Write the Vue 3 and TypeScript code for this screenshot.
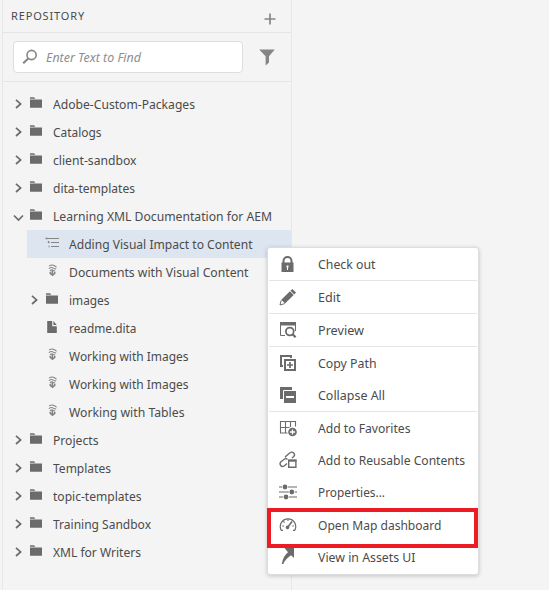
<script setup lang="ts">
interface TreeNode { label: string; icon: 'folder' | 'map' | 'topic' | 'file'; width: number; level?: number; open?: boolean; leaf?: boolean; selected?: boolean }
interface MenuItem { label: string; icon: string; width: number; height: number; line?: boolean; marked?: boolean }

const nodes: TreeNode[] = [
  { label: 'Adobe-Custom-Packages', icon: 'folder', width: 142 },
  { label: 'Catalogs', icon: 'folder', width: 48.5 },
  { label: 'client-sandbox', icon: 'folder', width: 83.5 },
  { label: 'dita-templates', icon: 'folder', width: 82 },
  { label: 'Learning XML Documentation for AEM', icon: 'folder', width: 219, open: true },
  { label: 'Adding Visual Impact to Content', icon: 'map', width: 183.5, level: 1, leaf: true, selected: true },
  { label: 'Documents with Visual Content', icon: 'topic', width: 179.5, level: 1, leaf: true },
  { label: 'images', icon: 'folder', width: 40.5, level: 1 },
  { label: 'readme.dita', icon: 'file', width: 67.5, level: 1, leaf: true },
  { label: 'Working with Images', icon: 'topic', width: 119.5, level: 1, leaf: true },
  { label: 'Working with Images', icon: 'topic', width: 119.5, level: 1, leaf: true },
  { label: 'Working with Tables', icon: 'topic', width: 115.5, level: 1, leaf: true },
  { label: 'Projects', icon: 'folder', width: 45.5 },
  { label: 'Templates', icon: 'folder', width: 58 },
  { label: 'topic-templates', icon: 'folder', width: 88.5 },
  { label: 'Training Sandbox', icon: 'folder', width: 98 },
  { label: 'XML for Writers', icon: 'folder', width: 88 },
]

const menu: MenuItem[] = [
  { label: 'Check out', icon: 'lock', width: 57.5, height: 33, line: true },
  { label: 'Edit', icon: 'edit', width: 22.5, height: 33, line: true },
  { label: 'Preview', icon: 'preview', width: 46, height: 33, line: true },
  { label: 'Copy Path', icon: 'copy', width: 58.5, height: 32 },
  { label: 'Collapse All', icon: 'collapse', width: 67, height: 33, line: true },
  { label: 'Add to Favorites', icon: 'favorite', width: 92.5, height: 32 },
  { label: 'Add to Reusable Contents', icon: 'reuse', width: 147, height: 32 },
  { label: 'Properties...', icon: 'properties', width: 67, height: 32 },
  { label: 'Open Map dashboard', icon: 'gauge', width: 123.5, height: 33, marked: true },
  { label: 'View in Assets UI', icon: 'arrow', width: 97.5, height: 31 },
]

// Spreads the letters so that a text takes its design width.
const vFit = {
  mounted(el: HTMLElement, binding: { value: number }) {
    const natural = el.getBoundingClientRect().width
    el.style.letterSpacing = `${(binding.value - natural) / (el.textContent?.length ?? 1)}px`
  },
}

// Condenses the letterforms of a label to its design width.
const vCondense = {
  mounted(el: HTMLElement, binding: { value: number }) {
    el.style.transform = `scaleX(${binding.value / el.getBoundingClientRect().width})`
  },
}
</script>

<template>
  <div class="page">
    <aside class="panel">
      <header class="head">
        <h1 v-fit="74">REPOSITORY</h1>
        <svg class="plus" width="12" height="12" viewBox="0 0 12 12"><path d="M6 .5v11M.5 6h11" stroke="#858585" stroke-width="1.7" /></svg>
      </header>
      <div class="search">
        <div class="field">
          <svg width="16" height="16" viewBox="0 0 16 16" fill="none" stroke="#858585"><circle cx="9.6" cy="6" r="4.6" stroke-width="1.6" /><path d="M6.2 9.4 1.2 14.2" stroke-width="2.1" /></svg>
          <span v-condense="95" class="label">Enter Text to Find</span>
        </div>
        <svg class="funnel" width="16" height="17" viewBox="0 0 16 17"><path d="M.2.5h15.6L10 7.3v6.3l-3.4 3V7.3z" fill="#858585" /></svg>
      </div>
      <ul class="tree">
        <li v-for="(n, i) in nodes" :key="i" :class="{ nested: n.level, selected: n.selected }">
          <span class="twist">
            <svg v-if="n.open" class="down" width="11" height="8" viewBox="0 0 11 8"><path d="m1 1.5 4.5 4.5L10 1.5" fill="none" stroke="#6b6b6b" stroke-width="1.7" /></svg>
            <svg v-else-if="!n.leaf" width="8" height="10" viewBox="0 0 8 10"><path d="m1 .8 4.6 4.1L1 9" fill="none" stroke="#6b6b6b" stroke-width="1.7" /></svg>
          </span>
          <span class="kind">
            <svg width="16" height="16" viewBox="0 0 16 16">
              <path v-if="n.icon === 'folder'" d="M1 2.2h4l1.5 1.5H1zM1 4.5h12v8.3H1z" fill="#6b6b6b" />
              <g v-else-if="n.icon === 'map'" stroke="#858585"><path d="M1 3.5h13M6 7.5h8M6 11.5h8" /><path d="M.5 3.5h2M3.5 7.5h1M3.5 11.5h1M3.5 6v2" stroke-width="1.3" /></g>
              <g v-else-if="n.icon === 'topic'" fill="none" stroke="#858585"><path d="M4 3.1q3-2 5.5-.3T11 3.6M3.8 5.6q2.5-1.8 4.5-.5t2.8.5M5 7.6q2-1.2 3-.3t2 .3" stroke-width="1.1" /><path d="M7.3 7v4" stroke-width="1.4" /><path d="M4.5 8.7h1.7v1.5h2.6V8.7h1.7v2L7.5 13.3 4.5 10.7z" fill="#858585" stroke="none" /></g>
              <path v-else d="M2.2 2h5v5.3h4.6V14H2.2zM8.4 2 11.8 6H8.4z" fill="#6b6b6b" />
            </svg>
          </span>
          <span v-condense="n.width" class="label">{{ n.label }}</span>
        </li>
      </ul>
    </aside>

    <nav class="menu">
      <div v-for="m in menu" :key="m.label" class="item" :class="{ line: m.line, marked: m.marked }" :style="{ height: m.height + 'px' }">
        <svg width="18" height="18" viewBox="0 0 18 18" fill="none" stroke="#6b6b6b">
          <g v-if="m.icon === 'lock'"><path d="M4.5 8V6a4 4 0 0 1 8 0v2" stroke-width="2" /><path d="M2.5 7.5h12V17h-12zM7.5 10.5v1.7l.5.5V15h1v-2.3l.5-.5v-1.7z" fill="#6b6b6b" fill-rule="evenodd" stroke="none" /></g>
          <g v-else-if="m.icon === 'edit'" stroke="none" fill="#6b6b6b"><path d="m13.3 1 3.7 3.6-1.7 1.8-3.8-3.7zM10.9 3.3l3.8 3.7L6 15.4 2.3 11.8z" /><path d="M2.2 12.3 1 17l4.7-1.4" stroke="#6b6b6b" fill="none" /></g>
          <g v-else-if="m.icon === 'preview'"><path d="M1 1h16v3.5H1z" fill="#6b6b6b" stroke="none" /><path d="M1.5 3v11.5H6M16.5 3v7" /><circle cx="10.8" cy="10.5" r="3.9" stroke-width="1.8" /><path d="m13.6 13.2 3 3" stroke-width="2.2" /></g>
          <g v-else-if="m.icon === 'copy'"><path d="M4 12H2V2h10v2" stroke-width="2" /><path d="M6 6h10v10H6z" stroke-width="2" /><path d="M11 8v6M8 11h6" stroke-width="1.7" /></g>
          <g v-else-if="m.icon === 'collapse'" fill="#6b6b6b" stroke="none"><path d="M1 1h12v3H5v9H1zM5 5h12v12H5z" /><path d="M4.5 13V4.5H13" fill="none" stroke="#fff" /><path d="M7 10h8v2H7z" fill="#fff" /></g>
          <g v-else-if="m.icon === 'favorite'"><path d="M1.5 2.5h15v5M1.5 2v12h7M6.5 2v12M11.5 2v6M1.5 8.5h9" stroke-width="1.1" /><circle cx="13.5" cy="13" r="4.3" fill="#6b6b6b" stroke="none" /><path d="M13.5 10.4v5.2M10.9 13h5.2" stroke="#fff" stroke-width="1.3" /></g>
          <g v-else-if="m.icon === 'reuse'"><path d="m6 6 4.7-4q2.3-1.7 4 0t.1 3.5L13 7M8.5 8.5 6.7 7.3 2 10.7q-1.8 2-.3 3.8t3.8.2L8 12.5" stroke-width="1.4" /><path d="M9.7 9.2h7.2v7H9.7z" stroke-width="1.4" /><path d="M9 9.7h8.5" stroke-width="2" /></g>
          <g v-else-if="m.icon === 'properties'"><path d="M0 4h18M0 9h18M0 14h18" stroke-width="1.2" /><path d="M3 4h6M9.8 9h6M4 14h6" stroke="#fff" stroke-width="3" /><circle cx="6" cy="4" r="2.4" fill="#6b6b6b" stroke="none" /><circle cx="12.8" cy="9" r="2.4" fill="#6b6b6b" stroke="none" /><circle cx="7" cy="14" r="2.4" fill="#6b6b6b" stroke="none" /></g>
          <g v-else-if="m.icon === 'gauge'"><path d="M4 14.3H2.3A7.7 7.7 0 1 1 15.7 14.3H14" stroke-width="1.2" /><path d="M3.3 10H5M4.4 5.4l1.2 1.2M9 3.3V5M13.2 10h1.7" stroke-width="1.1" /><circle cx="8.5" cy="11.4" r="1.8" fill="#6b6b6b" stroke="none" /><path d="m9 11 4-5.5" stroke-width="1.6" /></g>
          <path v-else d="M5.5 0H15v10l-2.9-2.8Q6.2 11 4.3 16H2.8Q4 8 9 4.2z" fill="#6b6b6b" stroke="none" />
        </svg>
        <span v-condense="m.width" class="label">{{ m.label }}</span>
      </div>
    </nav>
  </div>
</template>

<style>
body { margin: 0; background: #f4f4f4; overflow: hidden; }
</style>
<style scoped>
.page { position: relative; width: 549px; height: 590px; background: #f4f4f4; font-family: "Noto Sans", sans-serif; font-size: 13px; color: #4b4b4b; overflow: hidden; }
.panel { box-sizing: border-box; width: 290px; height: 590px; margin-left: 2px; border: solid #e8e8e8; border-width: 0 1px; }
.head { box-sizing: border-box; height: 33px; display: flex; justify-content: space-between; padding: 7px 15px 0 8px; border-bottom: 1px solid #e5e5e5; }
h1 { margin: 0; height: 18px; font-size: 11px; line-height: 18px; font-weight: 400; align-self: flex-start; }
.plus { margin-top: 6px; }
.search { box-sizing: border-box; height: 49px; display: flex; padding: 8px 0 0 10px; border-bottom: 1px solid #e5e5e5; }
.field { box-sizing: border-box; width: 230px; height: 32px; display: flex; align-items: center; gap: 8px; padding-left: 8px; border: 1px solid #ddd; border-radius: 4px; background: #fff; color: #8e8e8e; font-style: italic; white-space: nowrap; }
.funnel { margin: 8px 0 0 16px; }
.tree { list-style: none; margin: 0; padding: 8px 0 0; }
li { height: 28px; display: flex; align-items: center; padding-left: 8px; white-space: nowrap; }
.nested { margin-left: 24px; padding-left: 0; }
.selected { background: #dde5f0; }
.twist { width: 18px; height: 28px; display: flex; align-items: center; justify-content: center; padding-bottom: 1px; box-sizing: border-box; }
.nested .twist { width: 15px; }
.twist svg { margin-left: -3px; }
.nested .twist svg { margin-left: 0; }
.twist .down { margin: 4px 0 0 -4px; }
.kind { width: 23.5px; height: 16px; margin-top: -3px; }
.nested .kind { margin-left: 3px; }
.kind svg { display: block; }
.label { flex: none; line-height: 20px; white-space: nowrap; transform-origin: left center; }
.menu { position: absolute; left: 267px; top: 247px; box-sizing: border-box; width: 212px; height: 328px; background: #fff; border: 1px solid #ddd; border-radius: 3px; box-shadow: 0 1px 4px #0003; }
.item { position: relative; box-sizing: border-box; display: flex; align-items: center; gap: 20.5px; padding-left: 11px; margin: 0 1px; width: 208px; }
.item > svg { margin-left: -1px; flex: none; }
.line { border-bottom: 1px solid #e4e4e4; }
.marked::after { content: ""; position: absolute; z-index: 1; box-sizing: border-box; left: -2px; top: 0; width: 211px; height: 40px; border: 4px solid #ed1c24; }
</style>
